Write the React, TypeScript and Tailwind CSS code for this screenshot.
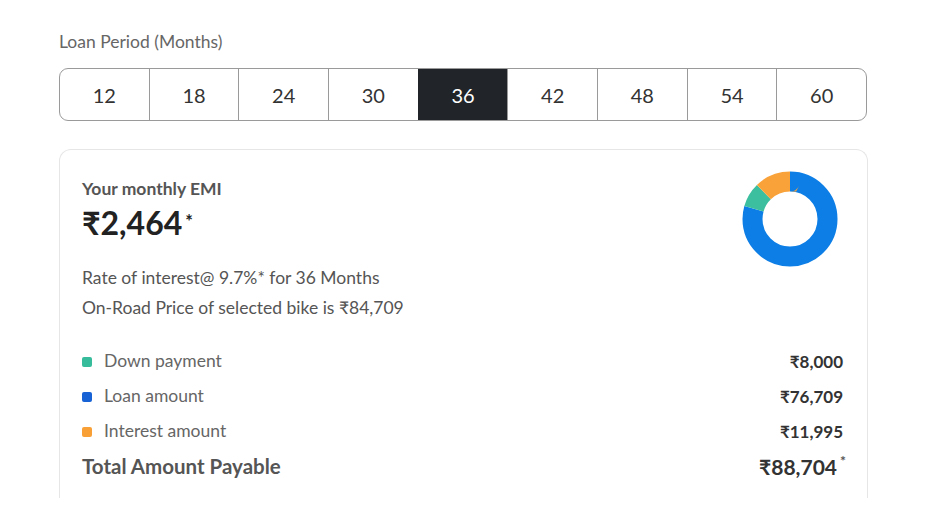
import React from 'react';

const periods = [12, 18, 24, 30, 36, 42, 48, 54, 60];

const parts = [
  { label: 'Down payment', value: 8000, text: '₹8,000', chart: '#3cbf9f', dot: 'bg-[#36bb9b]' },
  { label: 'Loan amount', value: 76709, text: '₹76,709', chart: '#0c7ee6', dot: 'bg-[#1762d4]' },
  { label: 'Interest amount', value: 11995, text: '₹11,995', chart: '#f9a23a', dot: 'bg-[#f8a035]' },
];

const Donut: React.FC = () => {
  const r = 37.5;
  const c = 2 * Math.PI * r;
  const total = parts.reduce((s, p) => s + p.value, 0);
  // chart order clockwise from top: loan, down payment, interest
  const order = [parts[1], parts[0], parts[2]];
  let offset = 0;
  return (
    <svg width="96" height="96" viewBox="0 0 96 96" className="shrink-0">
      <g transform="rotate(-90 48 48)">
        {order.map((p) => {
          const len = (p.value / total) * c;
          const el = (
            <circle
              key={p.label}
              cx="48"
              cy="48"
              r={r}
              fill="none"
              stroke={p.chart}
              strokeWidth="20"
              strokeDasharray={`${len} ${c - len}`}
              strokeDashoffset={-offset}
            />
          );
          offset += len;
          return el;
        })}
      </g>
    </svg>
  );
};

const App: React.FC = () => {
  return (
    <div className="w-[930px] h-[523px] bg-white overflow-hidden pl-[59px] pt-[32px] font-['Lato','Noto_Sans',sans-serif]">
      <p className="text-[17.5px] leading-[20px] text-[#666]">Loan Period (Months)</p>

      {/* Period selector */}
      <div className="mt-[16px] w-[808px] h-[53px] flex border-[1.5px] border-[#9a9a9a] rounded-[9px] overflow-hidden">
        {periods.map((m, i) => (
          <div
            key={m}
            className={`flex-1 flex items-center justify-center text-[20px] ${
              i > 0 ? 'border-l-[1.5px] border-[#9a9a9a]' : ''
            } ${m === 36 ? 'bg-[#212529] text-white border-[#212529]' : 'text-[#333]'}`}
          >
            {m}
          </div>
        ))}
      </div>

      {/* EMI card */}
      <div className="mt-[28px] w-[809px] h-[349px] border-x border-t border-[#e6e6e6] rounded-t-[12px] pl-[22px] pr-[24px] pt-[21px]">
        <div className="flex justify-between items-start">
          <div className="pt-[8px]">
            <p className="text-[17.5px] leading-[20px] font-bold text-[#555]">Your monthly EMI</p>
            <p className="mt-[6px] text-[32px] leading-[36px] font-bold text-[#222]">
              ₹2,464<span className="text-[18px] ml-[3px] align-top relative -top-[2px]">*</span>
            </p>
            <div className="mt-[22px] text-[17.5px] leading-[30px] text-[#555]">
              <p>Rate of interest@ 9.7%* for 36 Months</p>
              <p>On-Road Price of selected bike is ₹84,709</p>
            </div>
          </div>
          <div className="mr-[5px]">
            <Donut />
          </div>
        </div>

        <div className="mt-[21px]">
          {parts.map((p) => (
            <div key={p.label} className="flex items-center justify-between h-[35px]">
              <div className="flex items-center">
                <span className={`w-[10px] h-[10px] rounded-[2px] ${p.dot}`} />
                <span className="ml-[12px] text-[17.5px] text-[#666]">{p.label}</span>
              </div>
              <span className="text-[17px] font-bold text-[#333]">{p.text}</span>
            </div>
          ))}
          <div className="flex items-center justify-between h-[35px]">
            <span className="text-[20.5px] font-bold text-[#555]">Total Amount Payable</span>
            <span className="text-[21px] font-bold text-[#333] mr-[-3px]">
              ₹88,704<span className="text-[14px] ml-[3px] align-top relative -top-[1px] text-[#555]">*</span>
            </span>
          </div>
        </div>
      </div>
    </div>
  );
};

export default App;
